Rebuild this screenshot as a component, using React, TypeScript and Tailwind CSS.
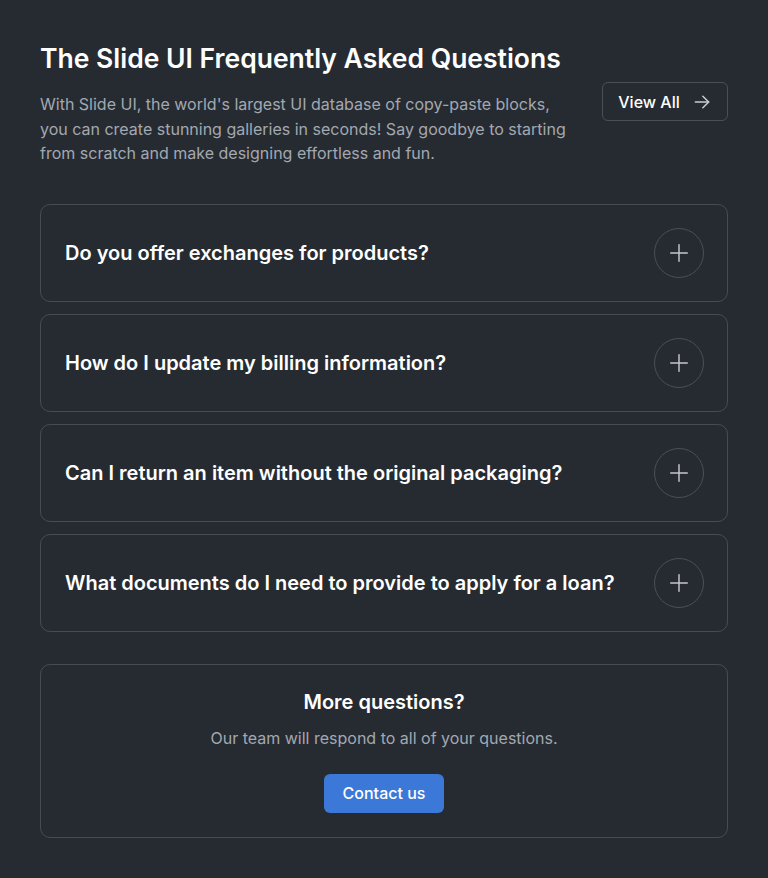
import React from "react";

const questions = [
  "Do you offer exchanges for products?",
  "How do I update my billing information?",
  "Can I return an item without the original packaging?",
  "What documents do I need to provide to apply for a loan?",
];

export default function App() {
  return (
    <div
      className="min-h-[878px] w-full bg-[#262b32] p-10 text-white"
      style={{ fontFamily: "Inter, 'Noto Sans', sans-serif" }}
    >
      <div className="flex items-center justify-between gap-8">
        <div className="max-w-[534px]">
          <h1 className="whitespace-nowrap text-[26.5px] font-semibold leading-[36px] text-white">
            The Slide UI Frequently Asked Questions
          </h1>
          <p className="mt-4 text-[16px] leading-[24.5px] text-[#a3a8b0]">
            With Slide UI, the world's largest UI database of copy-paste blocks, you can create stunning galleries in seconds! Say goodbye to starting from scratch and make designing effortless and fun.
          </p>
        </div>
        <button className="mt-[-2px] flex h-[39px] w-[126px] shrink-0 items-center justify-center gap-3 rounded-md border border-[#4a5058] text-[16px] font-medium text-white">
          View All
          <svg width="20" height="20" viewBox="0 0 24 24" fill="none" stroke="#c9cdd3" strokeWidth="1.75" strokeLinecap="round" strokeLinejoin="round">
            <path d="M4 12h16" />
            <path d="M13 5l7 7-7 7" />
          </svg>
        </button>
      </div>

      <div className="mt-[38px] flex flex-col gap-3">
        {questions.map((q) => (
          <div
            key={q}
            className="flex items-center justify-between rounded-[10px] border border-[#474c54] py-[23px] pl-6 pr-[23px]"
          >
            <span className="text-[20px] font-semibold leading-7 text-white">{q}</span>
            <span className="flex h-[50px] w-[50px] shrink-0 items-center justify-center rounded-full border border-[#4a5058]">
              <svg width="22" height="22" viewBox="0 0 24 24" fill="none" stroke="#c3c7cd" strokeWidth="1.6" strokeLinecap="round">
                <path d="M12 3v18" />
                <path d="M3 12h18" />
              </svg>
            </span>
          </div>
        ))}
      </div>

      <div className="mt-8 flex flex-col items-center rounded-[10px] border border-[#474c54] px-6 pt-[23px] pb-6">
        <h2 className="text-[20px] font-semibold leading-7 text-white">More questions?</h2>
        <p className="mt-[10px] text-[16px] leading-6 text-[#a3a8b0]">
          Our team will respond to all of your questions.
        </p>
        <button className="mt-6 flex h-[39px] w-[120px] items-center justify-center rounded-md bg-[#3b78d8] text-[16px] font-medium text-white">
          Contact us
        </button>
      </div>
    </div>
  );
}
